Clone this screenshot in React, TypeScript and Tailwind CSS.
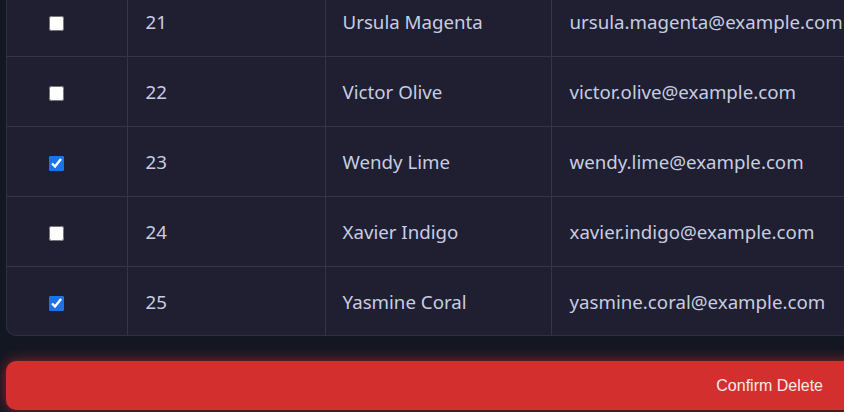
import { useState } from "react"

const rows = [
  { id: 21, name: "Ursula Magenta", email: "ursula.magenta@example.com", checked: false },
  { id: 22, name: "Victor Olive", email: "victor.olive@example.com", checked: false },
  { id: 23, name: "Wendy Lime", email: "wendy.lime@example.com", checked: true },
  { id: 24, name: "Xavier Indigo", email: "xavier.indigo@example.com", checked: false },
  { id: 25, name: "Yasmine Coral", email: "yasmine.coral@example.com", checked: true },
]

export default function App() {
  const [selected, setSelected] = useState<number[]>(rows.filter((r) => r.checked).map((r) => r.id))

  const toggle = (id: number) => {
    setSelected(selected.includes(id) ? selected.filter((s) => s !== id) : [...selected, id])
  }

  return (
    <div className="h-[412px] w-full overflow-hidden bg-[#131722] font-['Noto_Sans',sans-serif]">
      {/* page is scrolled: first row is cut off at the top */}
      <div className="-mt-[14px] w-[870px] px-[6px]">
        <div className="overflow-hidden rounded-b-[10px] border border-t-0 border-[#2e2f42] bg-[#1f1f31]">
          <table className="w-full border-collapse text-[18.7px] text-[#c8cde2]">
            <tbody>
              {rows.map((r, i) => (
                <tr key={r.id} className={i < rows.length - 1 ? "h-[70px] border-b border-[#34354a]" : "h-[69px]"}>
                  <td className="w-[120px] border-r border-[#34354a] pl-[42px] pt-[5px] text-left align-middle">
                    <input
                      type="checkbox"
                      checked={selected.includes(r.id)}
                      onChange={() => toggle(r.id)}
                      className="m-0 block h-[15px] w-[15px] accent-[#1a73e8]"
                    />
                  </td>
                  <td className="w-[198px] border-r border-[#34354a] pl-[18px] pt-[3px]">{r.id}</td>
                  <td className="w-[226px] border-r border-[#34354a] pl-[17px] pt-[3px]">{r.name}</td>
                  <td className="whitespace-nowrap pl-[18px] pt-[3px]">{r.email}</td>
                </tr>
              ))}
            </tbody>
          </table>
        </div>

        <div className="pt-[25px]">
          <button className="flex h-[49px] w-full items-center justify-end rounded-[10px] bg-[#d32f2f] pr-[41px] font-['Liberation_Sans',Arial,sans-serif] text-[16px] text-[#fbe9e9] shadow-[0_0_14px_rgba(211,47,47,0.65)]">
            Confirm Delete
          </button>
        </div>
      </div>
    </div>
  )
}
